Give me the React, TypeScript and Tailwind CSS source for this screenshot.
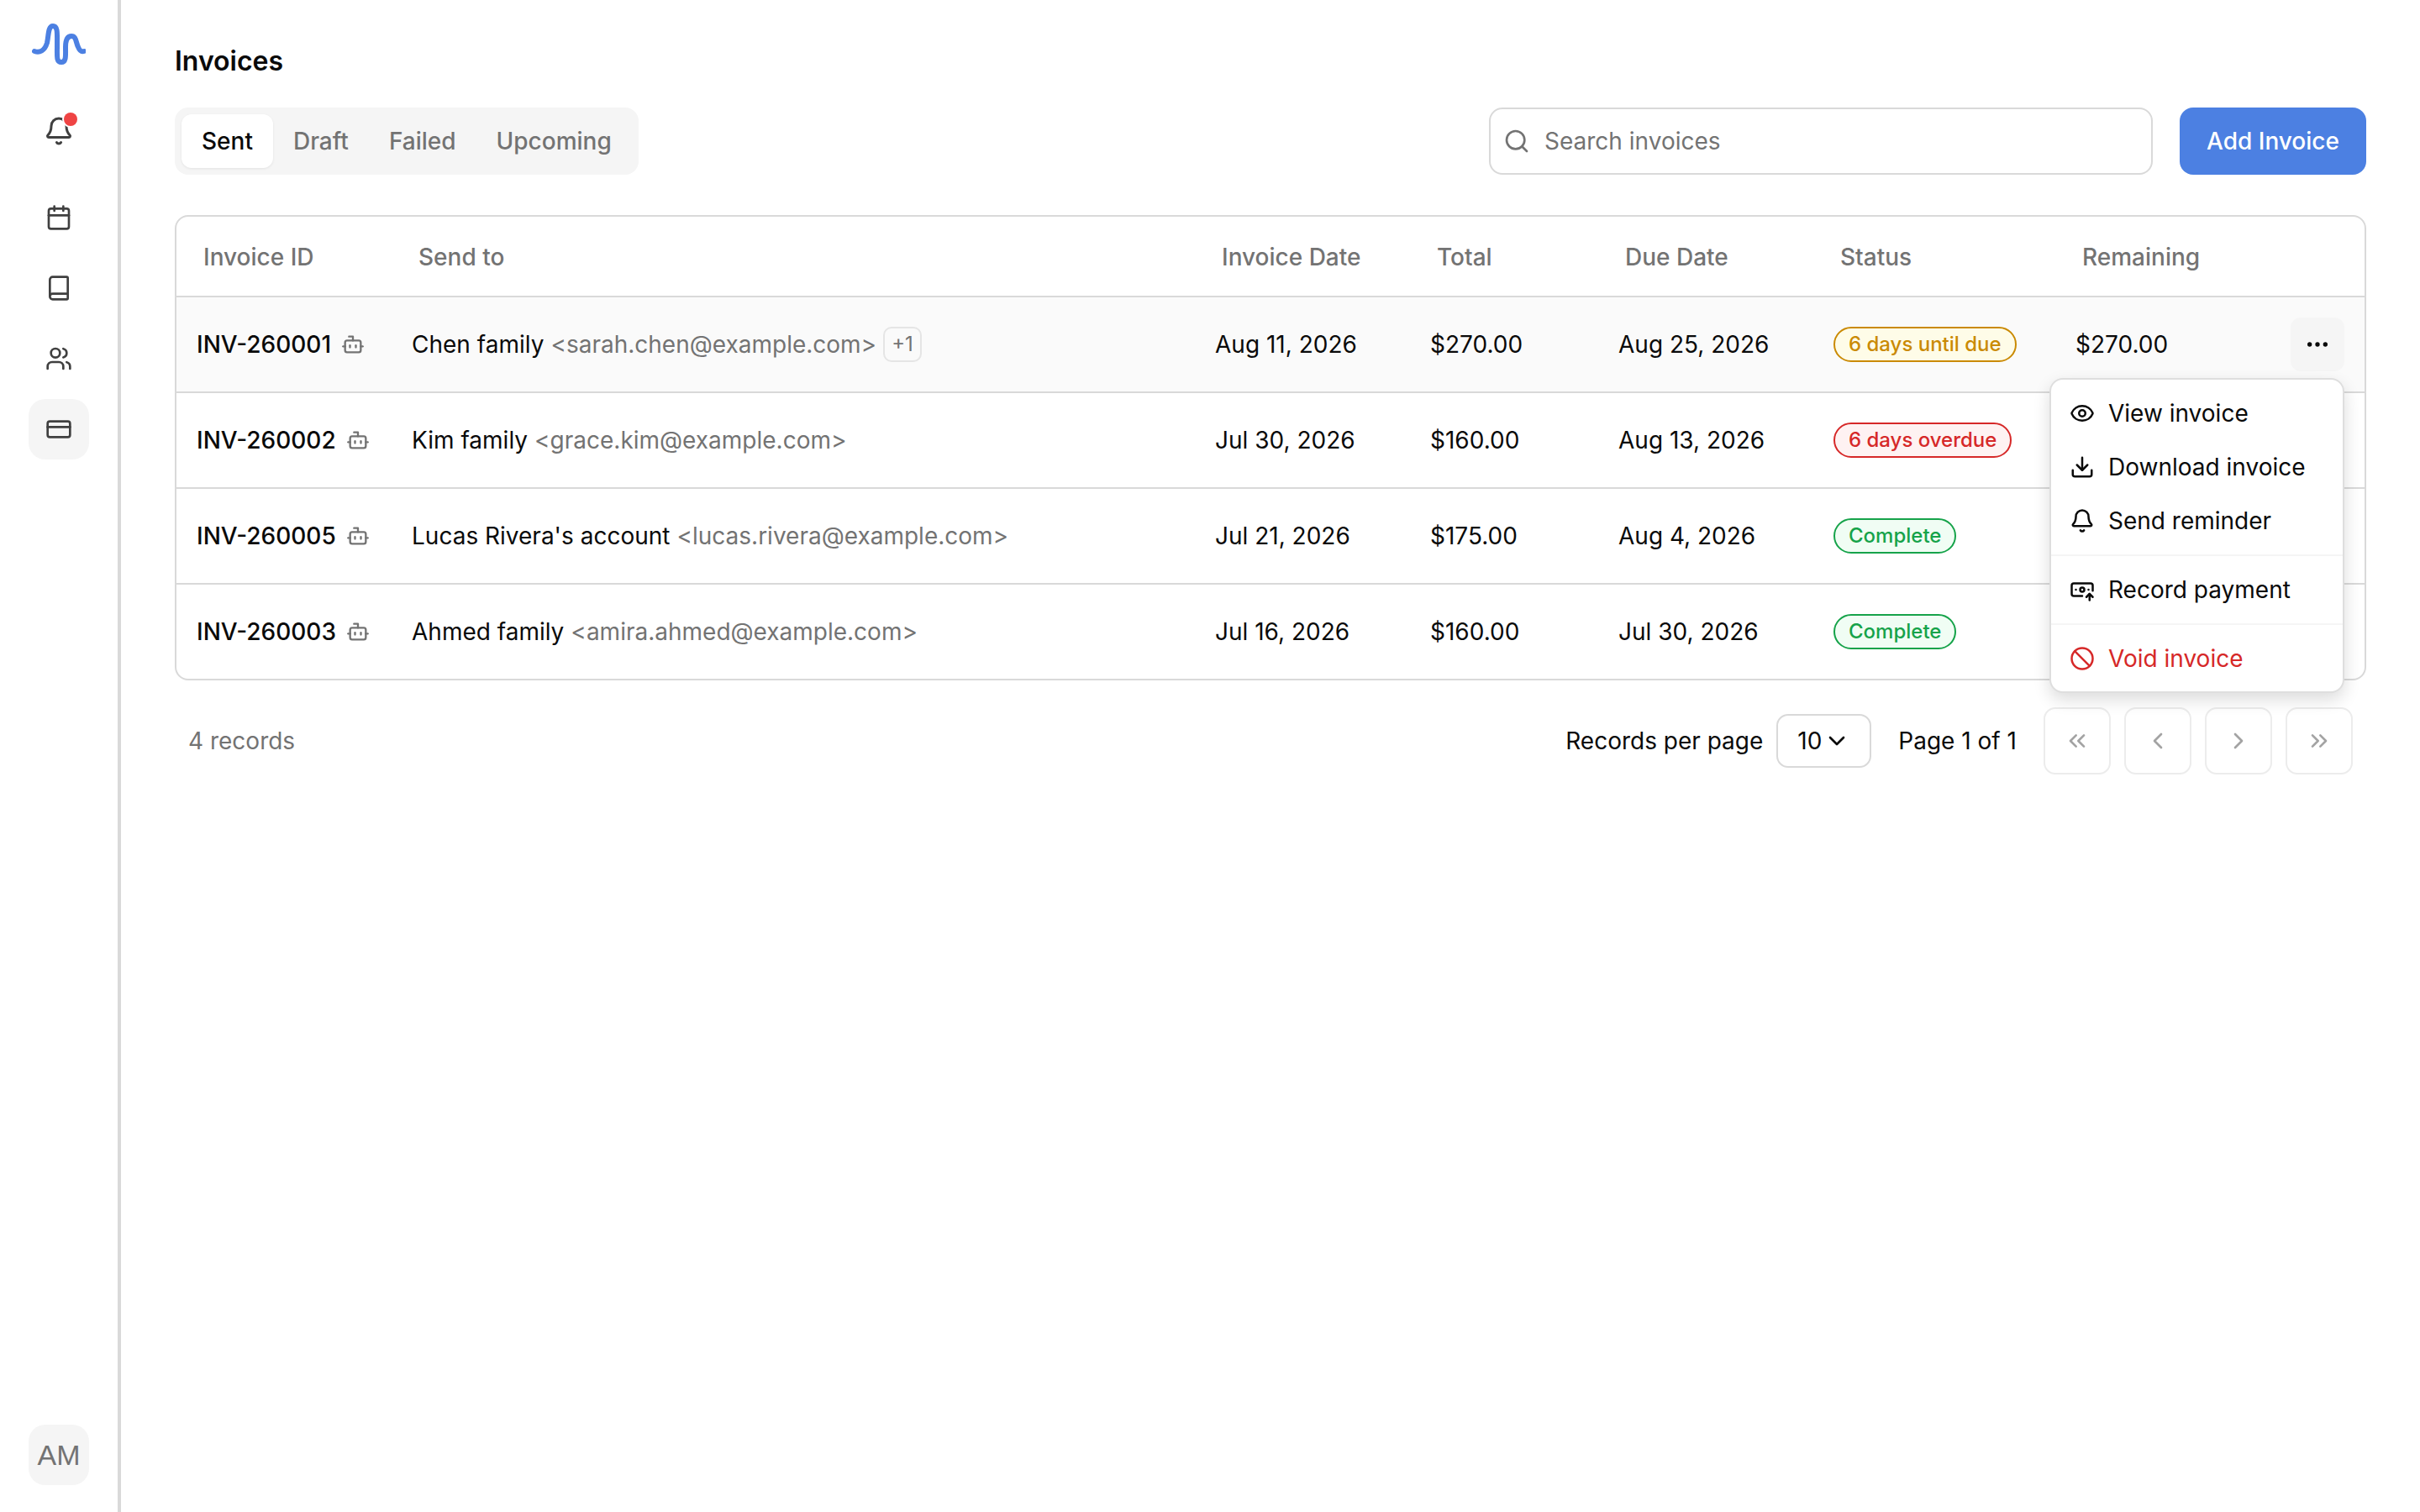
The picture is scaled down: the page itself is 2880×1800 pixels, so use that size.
import { Ban, BanknoteArrowUp, Bell, Book, Bot, Calendar, ChevronDown, ChevronLeft, ChevronRight, ChevronsLeft, ChevronsRight, CreditCard, Download, Ellipsis, Eye, Search, Users } from "lucide-react";

const rows = [
  { id: "INV-260001", name: "Chen family", email: "<sarah.chen@example.com>", extra: true, date: "Aug 11, 2026", total: "$270.00", due: "Aug 25, 2026", status: "6 days until due", tone: "border-[#ca8a04] bg-[#fefce8] text-[#ca8a04]", remaining: "$270.00" },
  { id: "INV-260002", name: "Kim family", email: "<grace.kim@example.com>", date: "Jul 30, 2026", total: "$160.00", due: "Aug 13, 2026", status: "6 days overdue", tone: "border-[#d62828] bg-[#fef2f2] text-[#d62828]" },
  { id: "INV-260005", name: "Lucas Rivera's account", email: "<lucas.rivera@example.com>", date: "Jul 21, 2026", total: "$175.00", due: "Aug 4, 2026", status: "Complete", tone: "border-[#16a34a] bg-[#f0fdf4] text-[#16a34a]" },
  { id: "INV-260003", name: "Ahmed family", email: "<amira.ahmed@example.com>", date: "Jul 16, 2026", total: "$160.00", due: "Jul 30, 2026", status: "Complete", tone: "border-[#16a34a] bg-[#f0fdf4] text-[#16a34a]" },
];

const columns = "grid grid-cols-[256px_956px_256px_224px_256px_288px_1fr]";

function Logo() {
  return (
    <svg width="64" height="54" viewBox="0 0 64 54" fill="none" className="text-[#4c80e2]">
      <path d="M3 35C9 37 15 35 18 25C20 16 19 5 25 5C31 5 30 14 30 28C30 42 29 48 35 48C41 48 40 40 40 30C40 21 42 17 47 17C53 17 52 24 55 30C57 35 59 36 62 35" stroke="currentColor" strokeWidth="6" strokeLinecap="round" strokeLinejoin="round" />
    </svg>
  );
}

function Sidebar() {
  return (
    <aside className="w-[144px] min-h-screen shrink-0 border-r-4 border-[#d9d9d9] flex flex-col items-center pt-[26px] pb-8 text-[#404040]">
      <Logo />
      <div className="relative mt-[58px] mb-[49px] w-9 h-9">
        <Bell size={36} />
        <span className="absolute -top-1 left-6 w-4 h-4 rounded-full bg-[#ef4444] ring-2 ring-white" />
      </div>
      <div className="flex flex-col gap-3">
        <div className="w-[72px] h-[72px] flex items-center justify-center"><Calendar size={32} /></div>
        <div className="w-[72px] h-[72px] flex items-center justify-center"><Book size={32} /></div>
        <div className="w-[72px] h-[72px] flex items-center justify-center"><Users size={32} /></div>
        <div className="w-[72px] h-[72px] flex items-center justify-center rounded-[20px] bg-[#f5f5f5]"><CreditCard size={32} /></div>
      </div>
      <div className="mt-auto w-[72px] h-[72px] rounded-[20px] bg-[#f5f5f5] flex items-center justify-center text-[34px] text-[#737373] font-['Liberation_Sans',sans-serif]">AM</div>
    </aside>
  );
}

function ActionMenu() {
  return (
    <div className="absolute left-[2439px] top-[450px] w-[351px] h-[375px] bg-white border-2 border-[#dedede] rounded-[16px] shadow-[0_8px_20px_rgba(0,0,0,0.14)] text-[28px] text-[#0a0a0a] py-2">
      <div className="px-2">
        <div className="h-16 px-[14px] flex items-center gap-4"><Eye size={30} />View invoice</div>
        <div className="h-16 px-[14px] flex items-center gap-4"><Download size={30} />Download invoice</div>
        <div className="h-16 px-[14px] flex items-center gap-4"><Bell size={30} />Send reminder</div>
      </div>
      <div className="my-2 h-[2px] bg-[#f5f5f5]" />
      <div className="px-2">
        <div className="h-16 px-[14px] flex items-center gap-4"><BanknoteArrowUp size={30} />Record payment</div>
      </div>
      <div className="my-2 h-[2px] bg-[#f5f5f5]" />
      <div className="px-2">
        <div className="h-16 px-[14px] flex items-center gap-4 text-[#d62828]"><Ban size={30} />Void invoice</div>
      </div>
    </div>
  );
}

export default function App() {
  return (
    <div className="relative min-h-screen flex bg-white text-[28px] text-[#0a0a0a] font-['Inter',sans-serif]">
      <Sidebar />
      <main className="flex-1 px-16 pt-[53px]">
        <h1 className="text-[32px] leading-10 font-semibold">Invoices</h1>

        <div className="mt-[35px] flex items-center justify-between">
          <div className="h-20 rounded-[16px] bg-[#f5f5f5] p-2 flex items-center text-[#737373] font-medium">
            <div className="h-16 px-6 rounded-[12px] bg-white text-[#0a0a0a] shadow-[0_1px_3px_rgba(0,0,0,0.08)] flex items-center">Sent</div>
            <div className="h-16 px-6 flex items-center">Draft</div>
            <div className="h-16 px-6 flex items-center">Failed</div>
            <div className="h-16 px-6 flex items-center">Upcoming</div>
          </div>
          <div className="flex items-center gap-8">
            <div className="w-[790px] h-20 rounded-[16px] border-2 border-[#d9d9d9] flex items-center gap-[17px] pl-[15px] text-[#737373]">
              <Search size={32} />
              <span>Search invoices</span>
            </div>
            <div className="w-[222px] h-20 rounded-[16px] bg-[#4c80e2] text-white font-medium flex items-center justify-center">Add Invoice</div>
          </div>
        </div>

        <div className="mt-12 rounded-[16px] border-2 border-[#d9d9d9] overflow-hidden">
          <div className={`${columns} h-[94px] pt-[2px] items-center text-[#737373] font-medium`}>
            <div className="pl-8">Invoice ID</div>
            <div className="pl-8">Send to</div>
            <div className="pl-8">Invoice Date</div>
            <div className="pl-8">Total</div>
            <div className="pl-8">Due Date</div>
            <div className="pl-8">Status</div>
            <div className="pl-8">Remaining</div>
          </div>
          {rows.map((row, i) => (
            <div key={row.id} className={`${columns} h-[114px] items-center border-t-2 border-[#d9d9d9] ${i === 0 ? "bg-[#fafafa]" : ""}`}>
              <div className="pl-6 flex items-center gap-3 font-medium">
                {row.id}
                <Bot size={28} className="text-[#737373]" />
              </div>
              <div className="pl-6 flex items-center gap-2 whitespace-nowrap">
                <span>{row.name}</span>
                <span className="text-[#737373]">{row.email}</span>
                {row.extra && <span className="h-[42px] px-2 rounded-[10px] border-2 border-[#e5e5e5] text-[24px] text-[#737373] flex items-center">+1</span>}
              </div>
              <div className="pl-6">{row.date}</div>
              <div className="pl-6">{row.total}</div>
              <div className="pl-6">{row.due}</div>
              <div className="pl-6 flex items-center">
                <span className={`inline-flex items-center h-[42px] px-4 rounded-full border-2 text-[24px] font-medium whitespace-nowrap ${row.tone}`}>{row.status}</span>
              </div>
              <div className="pl-6 pr-6 flex items-center justify-between">
                <span>{row.remaining}</span>
                {row.remaining && (
                  <div className="w-16 h-16 rounded-[12px] bg-[#f5f5f5] flex items-center justify-center"><Ellipsis size={32} /></div>
                )}
              </div>
            </div>
          ))}
        </div>

        <div className="mt-8 pl-4 pr-4 flex items-center justify-between">
          <span className="text-[#737373]">4 records</span>
          <div className="flex items-center">
            <span>Records per page</span>
            <div className="ml-4 w-[113px] h-16 rounded-[14px] border-2 border-[#d9d9d9] flex items-center justify-center gap-[2px]">10<ChevronDown size={32} /></div>
            <span className="ml-8">Page 1 of 1</span>
            <div className="ml-8 flex gap-4 text-[#a3a3a3]">
              <div className="w-20 h-20 rounded-[14px] border-2 border-[#ececec] flex items-center justify-center"><ChevronsLeft size={32} /></div>
              <div className="w-20 h-20 rounded-[14px] border-2 border-[#ececec] flex items-center justify-center"><ChevronLeft size={32} /></div>
              <div className="w-20 h-20 rounded-[14px] border-2 border-[#ececec] flex items-center justify-center"><ChevronRight size={32} /></div>
              <div className="w-20 h-20 rounded-[14px] border-2 border-[#ececec] flex items-center justify-center"><ChevronsRight size={32} /></div>
            </div>
          </div>
        </div>
      </main>
      <ActionMenu />
    </div>
  );
}
